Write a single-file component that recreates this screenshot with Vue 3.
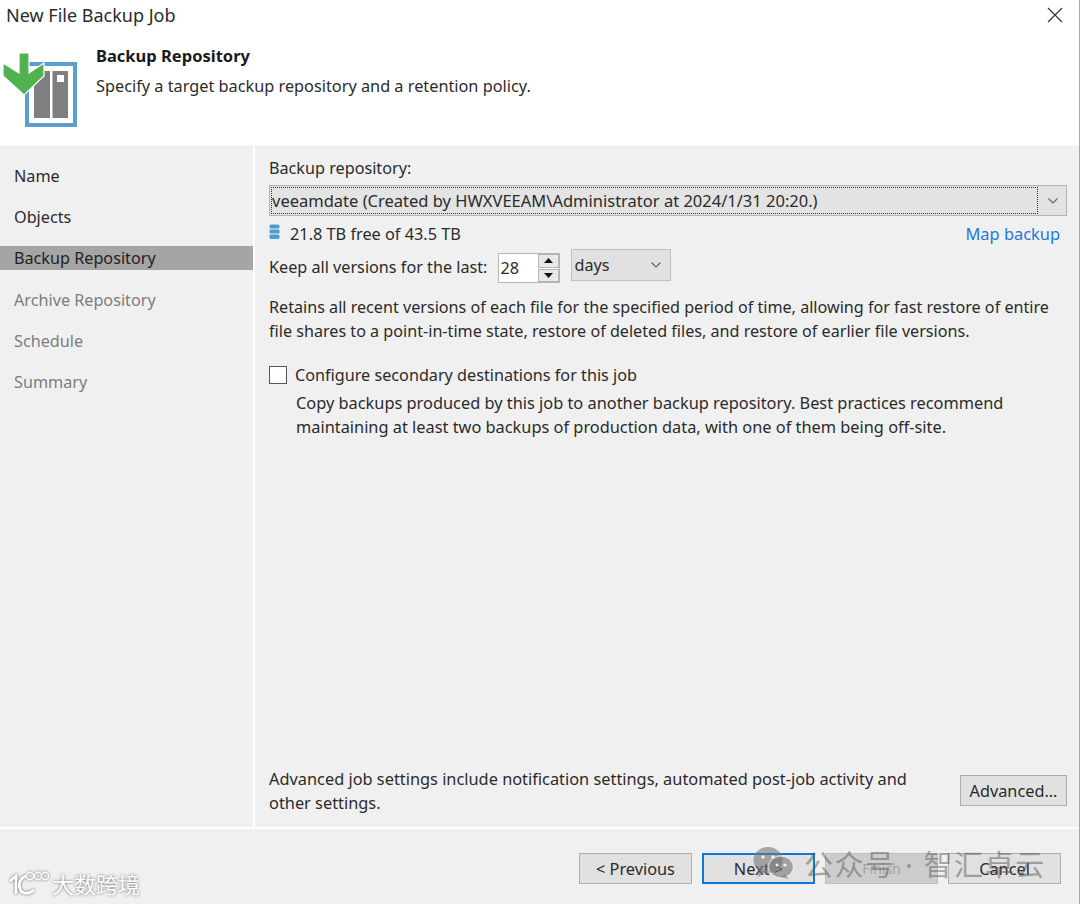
<script setup>
const steps = [
  { label: 'Name', state: 'done' },
  { label: 'Objects', state: 'done' },
  { label: 'Backup Repository', state: 'active' },
  { label: 'Archive Repository', state: 'off' },
  { label: 'Schedule', state: 'off' },
  { label: 'Summary', state: 'off' }
]
</script>

<template>
  <div class="win">
    <header class="head">
      <div class="titlebar">
        <span class="title">New File Backup Job</span>
        <svg class="close" width="16" height="16" viewBox="0 0 16 16"><path d="M1 1L15 15M15 1L1 15" stroke="#333" stroke-width="1.2" fill="none"/></svg>
      </div>
      <div class="banner">
        <svg class="logo" width="80" height="80" viewBox="0 0 80 80">
          <rect x="26" y="13" width="48" height="61" fill="#fff" stroke="#5a9fd0" stroke-width="4"/>
          <rect x="33" y="20" width="16" height="47" fill="#7f7f7f"/>
          <rect x="51.5" y="20" width="15.5" height="47" fill="#7f7f7f"/>
          <rect x="56" y="24" width="7" height="7" fill="#fff"/>
          <path d="M18 2H28V22L43 12V25L23 44L2 25V12L18 22Z" fill="#52b24f" stroke="#fff" stroke-width="1.2"/>
        </svg>
        <div class="banner-text">
          <div class="banner-title">Backup Repository</div>
          <div class="banner-sub">Specify a target backup repository and a retention policy.</div>
        </div>
      </div>
    </header>

    <div class="middle">
      <nav class="side">
        <div v-for="s in steps" :key="s.label" class="step" :class="s.state">{{ s.label }}</div>
      </nav>

      <main class="content">
        <div class="top">
          <div class="line label">Backup repository:</div>
          <div class="combo">
            <div class="combo-value"><span>veeamdate (Created by HWXVEEAM\Administrator at 2024/1/31 20:20.)</span></div>
            <div class="combo-arrow">
              <svg width="12" height="8" viewBox="0 0 12 8"><path d="M1.5 1.5L6 6L10.5 1.5" stroke="#666" stroke-width="1.2" fill="none"/></svg>
            </div>
          </div>
          <div class="free-row">
            <div class="free">
              <svg width="11" height="16" viewBox="0 0 11 16">
                <rect x="0.5" y="0.5" width="10" height="4" rx="1.5" fill="#4f9bd0"/>
                <rect x="0.5" y="5.5" width="10" height="4" rx="1" fill="#4f9bd0"/>
                <rect x="0.5" y="10.5" width="10" height="4.5" rx="1.5" fill="#4f9bd0"/>
              </svg>
              <span>21.8 TB free of 43.5 TB</span>
            </div>
            <a class="link">Map backup</a>
          </div>
          <div class="keep">
            <span>Keep all versions for the last:</span>
            <div class="spin">
              <span class="spin-val">28</span>
              <div class="spin-btns">
                <div class="spin-btn"><svg width="9" height="5" viewBox="0 0 9 5"><path d="M4.5 0L9 5H0Z" fill="#111"/></svg></div>
                <div class="spin-btn"><svg width="9" height="5" viewBox="0 0 9 5"><path d="M4.5 5L9 0H0Z" fill="#111"/></svg></div>
              </div>
            </div>
            <div class="days">
              <span>days</span>
              <svg width="12" height="8" viewBox="0 0 12 8"><path d="M1.5 1.5L6 6L10.5 1.5" stroke="#666" stroke-width="1.2" fill="none"/></svg>
            </div>
          </div>
          <p class="para">Retains all recent versions of each file for the specified period of time, allowing for fast restore of entire<br>file shares to a point-in-time state, restore of deleted files, and restore of earlier file versions.</p>
          <div class="check-row">
            <span class="check"></span>
            <span>Configure secondary destinations for this job</span>
          </div>
          <p class="para2">Copy backups produced by this job to another backup repository. Best practices recommend<br>maintaining at least two backups of production data, with one of them being off-site.</p>
        </div>
        <div class="advanced">
          <p>Advanced job settings include notification settings, automated post-job activity and<br>other settings.</p>
          <button class="btn adv-btn">Advanced...</button>
        </div>
      </main>
    </div>

    <footer class="foot">
      <button class="btn">&lt; Previous</button>
      <button class="btn primary">Next &gt;</button>
      <button class="btn disabled">Finish</button>
      <button class="btn">Cancel</button>
    </footer>

    <div class="wm-left">
      <svg width="40" height="26" viewBox="0 0 40 26" fill="none" stroke="#fff" stroke-width="2.6">
        <path d="M1 11L7 6V24M17 6C10 9 9 15 11 19C13 24 19 25 25 20" />
        <circle cx="21" cy="6" r="3.6" stroke-width="1.4"/>
        <circle cx="29" cy="6" r="3.6" stroke-width="1.4"/>
        <circle cx="36" cy="6" r="3.6" stroke-width="1.4"/>
      </svg>
      <span>大数跨境</span>
    </div>
    <div class="wm-right">
      <svg class="wx" width="42" height="34" viewBox="0 0 42 34">
        <ellipse cx="15" cy="14" rx="14.5" ry="13" fill="#777" opacity=".6"/>
        <path d="M6 22L5 31L14 26Z" fill="#777" opacity=".6"/>
        <circle cx="10" cy="11" r="1.8" fill="#eee"/>
        <circle cx="20" cy="11" r="1.8" fill="#eee"/>
        <ellipse cx="28" cy="21" rx="12.5" ry="11" fill="#777" stroke="#eee" stroke-width="1.5" opacity=".6"/>
        <path d="M32 29L36 33L27 31Z" fill="#777" opacity=".6"/>
        <circle cx="24" cy="19" r="1.6" fill="#eee"/>
        <circle cx="32" cy="19" r="1.6" fill="#eee"/>
      </svg>
      <span>公众号 · 智汇卓云</span>
    </div>
  </div>
</template>

<style>
html, body { margin: 0; padding: 0; background: #f0f0f0; }
</style>

<style scoped>
.win {
  position: relative;
  width: 1080px;
  height: 904px;
  overflow: hidden;
  display: flex;
  flex-direction: column;
  background: #f0f0f0;
  border-right: 1px solid #a8a8a8;
  box-sizing: border-box;
  font-family: "Noto Sans", "Open Sans", "Noto Sans CJK SC", sans-serif;
  font-size: 16.2px;
  color: #2b2b2b;
}
.head {
  height: 146px;
  flex: none;
  background: #fff;
  border-bottom: 1px solid #f6f6f6;
  box-sizing: border-box;
}
.titlebar {
  display: flex;
  justify-content: space-between;
  align-items: center;
  height: 30px;
  padding: 0 16px 0 6px;
}
.title { font-size: 18px; }
.banner { display: flex; padding-top: 12px; height: 100px; }
.logo { flex: none; width: 80px; height: 80px; margin-top: 9px; margin-left: 1px; }
.banner-text { padding-left: 15px; }
.banner-title { font-weight: 700; font-size: 16.5px; line-height: 28px; color: #1a1a1a; }
.banner-sub { font-size: 16.3px; line-height: 32px; }
.middle { flex: 1; display: flex; min-height: 0; }
.side {
  width: 253px;
  flex: none;
  padding-top: 18px;
  border-right: 2px solid #fff;
}
.step {
  height: 24px;
  line-height: 24px;
  margin-bottom: 17.2px;
  padding-left: 14px;
}
.step.done { color: #2b2b2b; }
.step.active { background: #a5a5a5; color: #222; }
.step.off { color: #7d7d7d; }
.content {
  flex: 1;
  display: flex;
  flex-direction: column;
  justify-content: space-between;
  padding: 10px 12px 10px 14px;
  min-width: 0;
}
.line { line-height: 24px; }
.combo {
  display: flex;
  height: 31px;
  margin-top: 5px;
  border: 1px solid #b4b4b4;
  background: #e3e3e3;
  box-sizing: border-box;
}
.combo-value { flex: 1; padding: 1px; min-width: 0; font-size: 16.5px; }
.combo-value span {
  display: block;
  height: 27px;
  line-height: 25px;
  border: 1px dotted #333;
  box-sizing: border-box;
}
.combo-arrow { width: 27px; display: flex; align-items: center; justify-content: center; }
.free-row {
  display: flex;
  justify-content: space-between;
  align-items: center;
  height: 24px;
  margin-top: 6px;
}
.free { display: flex; align-items: center; gap: 10px; line-height: 24px; font-size: 16.3px; }
.free svg { margin-top: -4px; }
.link { color: #1f78d8; font-size: 16.4px; padding-right: 7px; padding-bottom: 2px; }
.keep { display: flex; align-items: center; height: 33px; margin-top: 4px; }
.spin {
  display: flex;
  width: 62px;
  height: 30px;
  margin-left: 11px;
  margin-top: 3px;
  background: #fff;
  border: 1px solid #b4b4b4;
  box-sizing: border-box;
}
.spin-val { flex: 1; line-height: 28px; padding-left: 1px; }
.spin-btns { width: 21px; display: flex; flex-direction: column; gap: 1px; background: #fff; }
.spin-btn {
  flex: 1;
  background: #e8e8e8;
  border: 1px solid #b4b4b4;
  display: flex;
  align-items: center;
  justify-content: center;
}
.days {
  display: flex;
  justify-content: space-between;
  align-items: center;
  width: 100px;
  height: 32px;
  margin-left: 11px;
  margin-bottom: 4px;
  padding: 1px 8px 0 2px;
  background: #e1e1e1;
  border: 1px solid #c0c0c0;
  box-sizing: border-box;
}
.para { margin: 12px 0 0; line-height: 24px; font-size: 16.15px; }
.check-row { display: flex; align-items: center; gap: 8px; height: 24px; margin-top: 20px; }
.check {
  width: 18px;
  height: 18px;
  background: #fff;
  border: 1px solid #555;
  box-sizing: border-box;
  flex: none;
}
.para2 { margin: 4px 0 0 27px; line-height: 24px; font-size: 16.35px; }
.advanced {
  display: flex;
  justify-content: space-between;
  align-items: flex-start;
  margin-bottom: 2px;
}
.advanced p { margin: 0; line-height: 24px; font-size: 16.35px; }
.btn {
  width: 113px;
  height: 31px;
  padding: 0;
  border: 1px solid #adadad;
  background: #e1e1e1;
  font: inherit;
  font-size: 16.3px;
  color: #2b2b2b;
}
.adv-btn { width: 107px; margin-top: 8px; }
.foot {
  flex: none;
  height: 77px;
  box-sizing: border-box;
  border-top: 2px solid #fff;
  display: flex;
  justify-content: flex-end;
  gap: 10px;
  padding: 24px 18px 0 0;
}
.foot .btn.primary { border: 2px solid #0a78d7; }
.foot .btn.disabled { background: #cccccc; border-color: #bfbfbf; color: #a5a5a5; font-size: 14px; }
.wm-left {
  position: absolute;
  left: 9px;
  top: 867px;
  display: flex;
  align-items: center;
  gap: 3px;
  color: #fff;
  font-size: 22px;
  text-shadow: 0 0 3px #666;
}
.wm-left svg { filter: drop-shadow(0 0 1.5px #666); }
.wm-right {
  position: absolute;
  left: 753px;
  top: 842px;
  display: flex;
  align-items: center;
  gap: 9px;
  color: rgba(90, 90, 90, .5);
  font-size: 29px;
  letter-spacing: 1.6px;
  white-space: nowrap;
}
</style>
